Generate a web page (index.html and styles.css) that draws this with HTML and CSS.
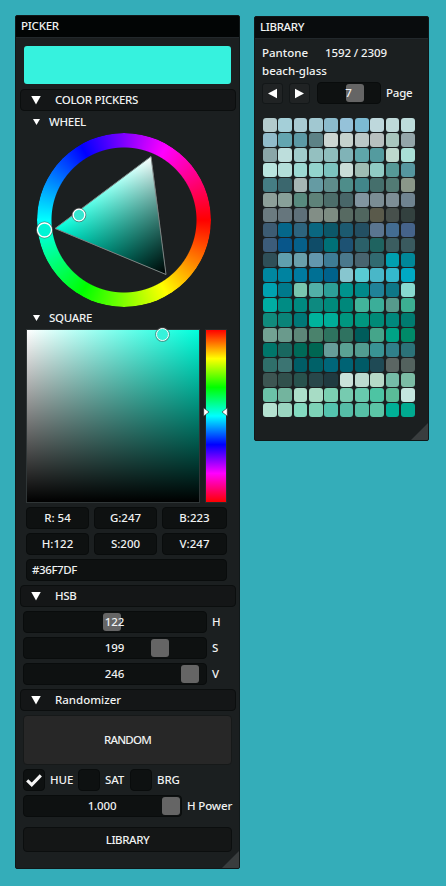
FILE: index.html
```html
<!DOCTYPE html>
<html lang="en">
<head>
<meta charset="utf-8">
<title>Color picker</title>
<link rel="stylesheet" href="styles.css">
</head>
<body>
<main class="desktop">
  <section class="window picker">
    <h1 class="title">PICKER</h1>
    <div class="preview"></div>
    <h2 class="header"><i class="down"></i><span class="caps">COLOR PICKERS</span></h2>
    <h3 class="node"><i class="down small"></i><span class="caps">WHEEL</span></h3>
    <div class="wheel">
      <div class="ring"></div>
      <svg class="overlay" viewBox="37 133 174 174" width="174" height="174">
        <defs>
          <linearGradient id="white" gradientUnits="userSpaceOnUse" x1="151" y1="156.5" x2="111.5" y2="251.9"><stop offset="0" stop-color="#fff"/><stop offset="1" stop-color="#fff" stop-opacity="0"/></linearGradient>
          <linearGradient id="black" gradientUnits="userSpaceOnUse" x1="166" y1="274.5" x2="104" y2="191.8"><stop offset="0" stop-color="#000"/><stop offset="1" stop-color="#000" stop-opacity="0"/></linearGradient>
        </defs>
        <path d="M55 228.5L151 156.5L166 274.5Z" fill="#00ffdc"/>
        <path d="M55 228.5L151 156.5L166 274.5Z" fill="url(#white)"/>
        <path d="M55 228.5L151 156.5L166 274.5Z" fill="url(#black)"/>
        <path d="M55 228.5L151 156.5L166 274.5Z" fill="none" stroke="#808080"/>
        <circle cx="44.5" cy="230" r="8" fill="none" stroke="#555" stroke-width=".8"/>
        <circle cx="44.5" cy="230" r="7" fill="#00f4d5" stroke="#fff" stroke-width="1.3"/>
        <circle cx="79" cy="215" r="6.8" fill="none" stroke="#555" stroke-width=".8"/>
        <circle cx="79" cy="215" r="5.8" fill="#36e7d0" stroke="#fff" stroke-width="1.3"/>
      </svg>
    </div>
    <h3 class="node"><i class="down small"></i><span class="caps">SQUARE</span></h3>
    <div class="square-row">
      <div class="square"><i class="cursor"></i></div>
      <div class="huebar">
        <svg class="arrows" viewBox="0 0 25 10" width="25" height="10"><path d="M.7.8L6 5L.7 9.2ZM24.3.8L19 5L24.3 9.2Z" fill="#fff" stroke="#222" stroke-width=".6"/></svg>
      </div>
    </div>
    <div class="fields">
      <div class="box">R: 54</div><div class="box">G:247</div><div class="box">B:223</div>
      <div class="box">H:122</div><div class="box">S:200</div><div class="box">V:247</div>
      <div class="box hex">#36F7DF</div>
    </div>
    <h2 class="header"><i class="down"></i><span class="caps">HSB</span></h2>
    <div class="sliders">
      <div class="line"><div class="box slider"><i class="thumb h"></i><span>122</span></div>H</div>
      <div class="line"><div class="box slider"><i class="thumb s"></i><span>199</span></div>S</div>
      <div class="line"><div class="box slider"><i class="thumb v"></i><span>246</span></div>V</div>
    </div>
    <h2 class="header"><i class="down"></i><span>Randomizer</span></h2>
    <div class="random">RANDOM</div>
    <div class="checks">
      <div class="box check"><svg viewBox="0 0 22 22" width="22" height="22"><path d="M3.5 11.5L8.5 16.2L18.5 6" fill="none" stroke="#f5f5f5" stroke-width="3.4"/></svg></div><span class="c1">HUE</span>
      <div class="box check"></div><span class="c2">SAT</span>
      <div class="box check"></div><span>BRG</span>
    </div>
    <div class="line power"><div class="box slider"><i class="thumb p"></i><span>1.000</span></div>H Power</div>
    <div class="library-button">LIBRARY</div>
    <i class="grip"></i>
  </section>

  <section class="window library">
    <h1 class="title">LIBRARY</h1>
    <div class="info"><span class="collection">Pantone</span><span class="count">1592 / 2309</span></div>
    <div class="info name">beach-glass</div>
    <div class="pager">
      <div class="arrow"><svg viewBox="0 0 21 21" width="21" height="21"><path d="M6 10.5L15 5.7V15.3Z" fill="#fff"/></svg></div>
      <div class="arrow"><svg viewBox="0 0 21 21" width="21" height="21"><path d="M15 10.5L6 5.7V15.3Z" fill="#fff"/></svg></div>
      <div class="box slider"><i class="thumb g"></i><span>7</span></div>
      <span class="page">Page</span>
    </div>
    <div class="palette" id="palette"></div>
    <i class="grip"></i>
  </section>
</main>
<script src="palette.js"></script>
</body>
</html>
```
FILE: styles.css
```css
* { box-sizing: border-box; }
body {
  margin: 0;
  background: #34adb9;
  color: #f0f2f2;
  font: 500 11.5px/16px "Noto Sans", sans-serif;
}
.desktop {
  display: flex;
  align-items: flex-start;
  gap: 14px;
  width: 446px;
  height: 886px;
  padding: 15px;
  overflow: hidden;
}
.window {
  position: relative;
  flex: none;
  background: #1b1f20;
  border: 1px solid #101819;
  border-radius: 2px;
  overflow: hidden;
}
.picker { width: 225px; height: 854px; }
.library { width: 175px; height: 425px; margin-top: 1px; }
h1, h2, h3 { margin: 0; font: inherit; }
.title {
  height: 22px;
  padding: 2px 5px;
  background: #020505;
  border-bottom: 1px solid #22282b;
  letter-spacing: -.35px;
}
.picker .title { letter-spacing: -.25px; }
.library .title { background: #090c0d; }
.caps { letter-spacing: -.3px; }
.preview {
  width: 207px;
  height: 38px;
  margin: 8px 0 5px 8px;
  background: #36f2de;
  border-radius: 3px;
}
.header {
  display: flex;
  align-items: center;
  width: 216px;
  height: 22px;
  margin-left: 4px;
  padding-left: 10px;
  background: #141617;
  border: 1px solid #0b0e0e;
  border-radius: 4px;
}
.down {
  width: 10px;
  height: 9px;
  margin-right: 14px;
  background: #fff;
  clip-path: polygon(0 0, 100% 0, 50% 100%);
}
.down.small { width: 7px; height: 6px; margin-right: 9px; }
.node { display: flex; align-items: center; height: 22px; padding-left: 17px; }
.wheel { position: relative; width: 174px; height: 174px; margin-left: 21px; }
.ring {
  height: 174px;
  border-radius: 50%;
  background: conic-gradient(from 90deg, #f00, #ff0, #0f0, #0ff, #00f, #f0f, #f00);
  mask: radial-gradient(circle, transparent 72px, #000 73px);
}
.overlay { position: absolute; inset: 0; overflow: visible; }
.square-row { display: flex; gap: 5px; margin-left: 10px; }
.square {
  position: relative;
  width: 174px;
  height: 174px;
  border: 1px solid #303637;
  background: linear-gradient(transparent, #000), linear-gradient(90deg, #fff, #00ffdc);
}
.cursor {
  position: absolute;
  left: 129px;
  top: -2px;
  width: 13px;
  height: 13px;
  border: 1.5px solid #fff;
  border-radius: 50%;
  background: #36f2da;
  box-shadow: 0 0 0 1px #5558;
}
.huebar {
  position: relative;
  width: 22px;
  height: 174px;
  border: 1px solid #252b2c;
  background: linear-gradient(#f00, #ff0, #0f0, #0ff, #00f, #f0f, #f00);
}
.arrows { position: absolute; left: -3px; top: 77px; }
.fields {
  display: grid;
  grid-template-columns: 63px 63px 65px;
  gap: 4px 5px;
  margin: 4px 0 4px 10px;
}
.box {
  display: flex;
  align-items: center;
  justify-content: center;
  height: 22px;
  background: #0e1111;
  border: 1px solid #090c0c;
  border-radius: 4px;
}
.fields .hex { grid-column: 1 / 4; justify-content: flex-start; padding-left: 5px; width: 201px; letter-spacing: -.4px; }
.sliders { display: grid; gap: 4px; margin: 4px 0 4px 7px; }
.line { display: flex; align-items: center; gap: 5px; }
.slider { position: relative; width: 184px; }
.slider span { position: relative; left: -.5px; }
.thumb {
  position: absolute;
  top: 1px;
  width: 18px;
  height: 18px;
  background: #656565;
  border-radius: 3px;
}
.h { left: 79px; }
.s { left: 127px; }
.v { left: 157px; }
.p { left: 138px; }
.g { left: 28px; }
.random, .library-button {
  display: flex;
  align-items: center;
  justify-content: center;
  width: 209px;
  margin-left: 7px;
  border-radius: 4px;
}
.random { height: 50px; margin-top: 4px; background: #272727; border: 1px solid #161919; letter-spacing: -.8px; }
.library-button { height: 25px; margin-top: 10px; background: #141616; border: 1px solid #0b0e0e; letter-spacing: -.4px; }
.checks { display: flex; align-items: center; margin: 4px 0 4px 7px; letter-spacing: -.1px; }
.check { width: 22px; margin-right: 5px; }
.c1 { width: 28px; }
.c2 { width: 25px; }
.power { margin-left: 7px; white-space: nowrap; letter-spacing: -.15px; }
.power .slider { width: 159px; }
.grip {
  position: absolute;
  right: 0;
  bottom: 0;
  width: 17px;
  height: 17px;
  background: #393d3e;
  clip-path: polygon(100% 0, 100% 100%, 0 100%);
}
.info { display: flex; height: 18px; margin-left: 7px; }
.title + .info { margin-top: 6px; }
.collection { width: 63px; }
.count { letter-spacing: -.1px; }
.pager { display: flex; align-items: center; height: 22px; margin: 1px 0 14px 7px; }
.arrow {
  display: flex;
  width: 21px;
  height: 21px;
  margin-right: 6px;
  background: #202324;
  border: 1px solid #131718;
  border-radius: 3px;
}
.arrow svg { flex: none; margin: -1px; }
.pager .slider { width: 64px; margin-left: 1px; }
.page { margin-left: 5px; letter-spacing: -.2px; }
.palette {
  display: grid;
  grid-template-columns: repeat(10, 13.6px);
  grid-auto-rows: 13.5px;
  gap: 1.5px 1.75px;
  width: 153px;
  margin-left: 8px;
}
.palette i { border-radius: 3px; }
```
FILE: palette.js
```js
const rows = [
  "b3cbcd a4cfd8 a9cbd3 a1c8d1 8cbccd 95c2d9 7cbad2 bed8dc bfdad9 bddcdb",
  "91bccb 63a5b0 5c99a5 5d8286 ccd6d2 c5d2cd bac8c7 b7c0bf a8c6bd 93a5a9",
  "8aa6a8 bddedc a0cccc 94c0c0 8fbebd 80b3b7 5fa6aa 549b9f bdd8cd a9dfd6",
  "bae5df b2ded9 9cd9d3 93d4cd 7cc3bf c9dcd7 9fbcb3 90cbc4 569997 55969f",
  "457d84 3b676e a5b6b5 659ba3 5e8d8c 4e8d8a 42868a 456f6c 527a74 8a9789",
  "8d9f99 88a099 588a7f 5e8279 4c6d6a 486668 8195a0 7b8d94 7d8e96 6f8390",
  "6b7b80 66767d 5e7079 828e86 7d8c82 576a62 50665f 5a5a4b 47504c 33413f",
  "3d5c73 05678a 2d647e 0a6780 0c5869 1c5a70 234f62 5a7590 436c91 45638a",
  "3c5c7a 08568a 06608a 0f4c68 007077 1d5273 2b6069 1f6360 3b5d60 3a5a5f",
  "2f4f58 619fae 6a9fab 6397ae 3e7c95 4a788c 48646f 316a70 00a0b0 008899",
  "0087a0 0083a0 007ba0 007094 00628c 87c6cf 59cbd3 49b7c8 34b9cc 00a9c3",
  "00a2b0 007a8c 79c6af 52b0a8 2d9f98 00938d 00898a 208298 0e7787 88d9cf",
  "00ada3 008c84 008a80 0d8a80 008a7c 00887b 42b49b 3bae99 569a8c 3caf92",
  "108a7c 0a8378 007877 00b39c 00ad99 00967f 00967f 008a77 00887d 007b70",
  "72a293 6a9a8c 5d8778 4a826c 2e735f 2f7260 005c5b 45a58a 00a386 008a68",
  "00766a 19675f 006a58 006652 679d9a 5aa294 529c90 399394 30808a 2b7278",
  "2f6f6a 3b7472 005d66 006168 006679 006374 005a66 1f4a55 5b6663 53625e",
  "3d5552 31504c 28524d 28474a 203a40 cae2da bddbd0 b6d9c7 75bca7 7bbca5",
  "6bc2a8 73b49e acdfca a7dcc5 7bd0b2 76cbb0 68c9ad 4dc4a3 5abc98 c4e6df",
  "b4e1d0 9ad5c0 84dac0 7dd2b7 54c3ae 55bda7 56c0a6 5bc5a6 00b096 00aa90"
];
const palette = document.getElementById("palette");
rows.join(" ").split(" ").forEach(color => {
  const cell = document.createElement("i");
  cell.style.background = "#" + color;
  palette.append(cell);
});
```
